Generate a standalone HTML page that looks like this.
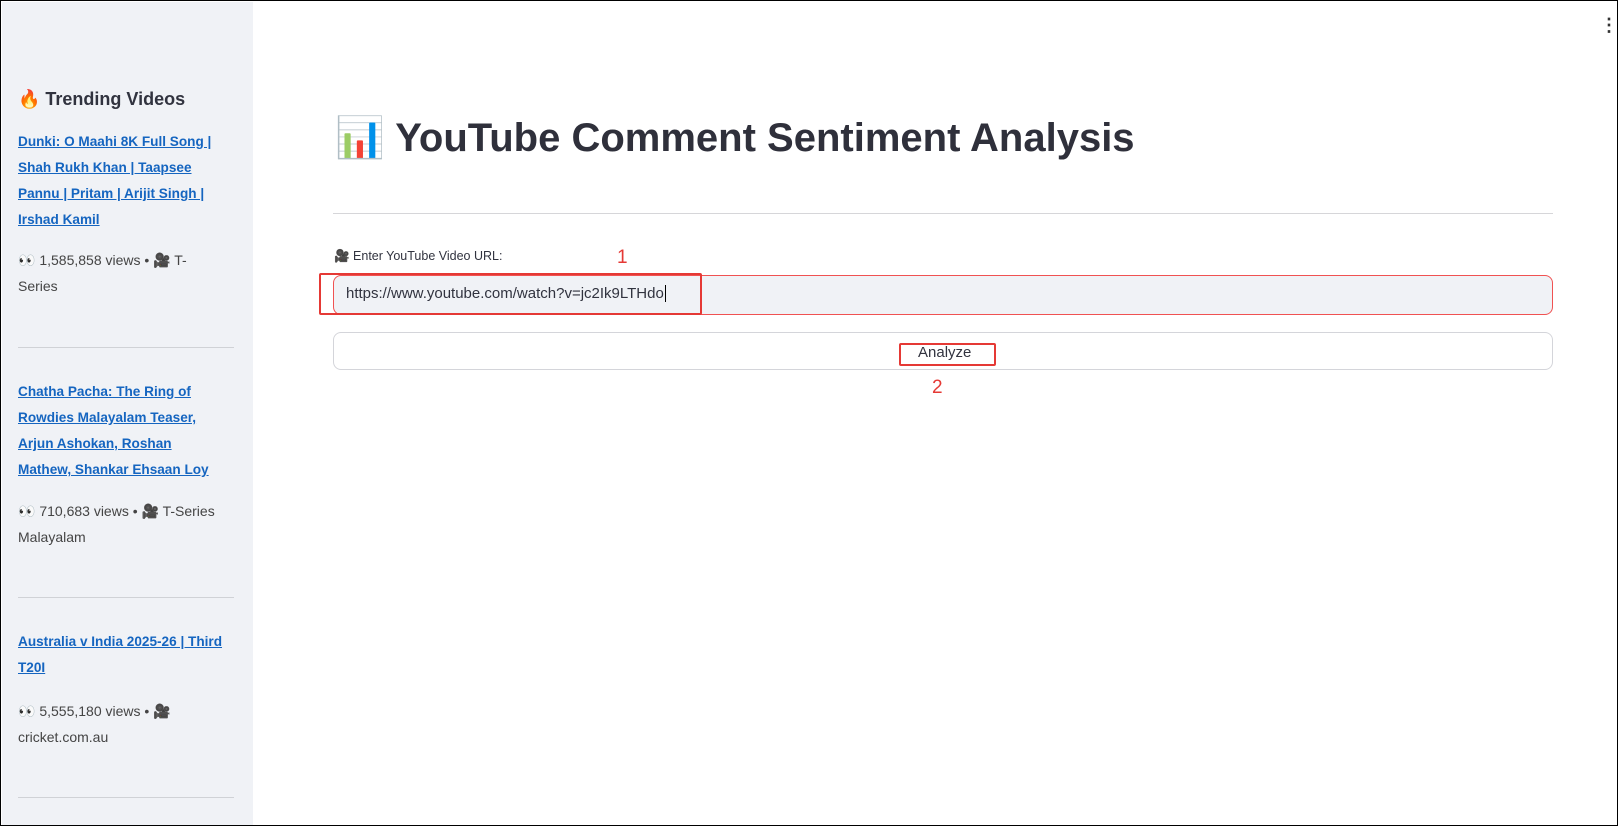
<!DOCTYPE html><html><head><style>
*{box-sizing:border-box;margin:0;padding:0}
body{width:1618px;height:826px;overflow:hidden;font-family:"Liberation Sans",sans-serif;background:#fff;position:relative;border:1px solid #000;color:#31333f}
.sb{position:absolute;left:1px;top:1px;width:251px;height:823px;background:#f0f2f6}
.a{position:absolute;white-space:nowrap}
.sb h3{position:absolute;left:16px;top:87px;font-size:18px;font-weight:bold}
.lk{position:absolute;left:16px;width:230px;font-size:13.6px;line-height:26px;font-weight:bold;color:#1565c0;text-decoration:underline;white-space:nowrap}
.vw{position:absolute;left:16px;width:200px;font-size:14px;line-height:26px;color:#444}
.hr{position:absolute;left:16px;width:216px;height:1px;background:#d0d2d6}
.r{position:absolute;border:2px solid #e53935;border-radius:2px}
</style></head><body>
<div class="sb">
<h3>🔥 Trending Videos</h3>
<div class="lk" style="top:127px">Dunki: O Maahi 8K Full Song |<br>Shah Rukh Khan | Taapsee<br>Pannu | Pritam | Arijit Singh |<br>Irshad Kamil</div>
<div class="vw" style="top:245px">👀 1,585,858 views • 🎥 T-Series</div>
<div class="hr" style="top:345px"></div>
<div class="lk" style="top:377px">Chatha Pacha: The Ring of<br>Rowdies Malayalam Teaser,<br>Arjun Ashokan, Roshan<br>Mathew, Shankar Ehsaan Loy</div>
<div class="vw" style="top:496px">👀 710,683 views • 🎥 T-Series Malayalam</div>
<div class="hr" style="top:595px"></div>
<div class="lk" style="top:627px">Australia v India 2025-26 | Third<br>T20I</div>
<div class="vw" style="top:696px">👀 5,555,180 views • 🎥 cricket.com.au</div>
<div class="hr" style="top:795px"></div>
</div>
<div class="a" style="left:1599px;top:14px;font-size:18px;font-weight:bold;color:#333">⋮</div>
<div class="a" style="left:334px;top:113px;font-size:40px;font-weight:bold;color:#2f303b">📊 YouTube Comment Sentiment Analysis</div>
<div class="a" style="left:332px;top:212px;width:1220px;height:1px;background:#d6d6d9"></div>
<div class="a" style="left:333px;top:248px;font-size:12.5px">🎥 Enter YouTube Video URL:</div>
<div class="a" style="left:332px;top:274px;width:1220px;height:40px;background:#f0f2f6;border:1px solid #f05252;border-radius:8px"></div>
<div class="a" style="left:345px;top:284px;font-size:15px;color:#31333f">https://www.youtube.com/watch?v=jc2Ik9LTHdo<span style="border-left:1px solid #000;margin-left:1px"></span></div>
<div class="r" style="left:318px;top:272px;width:383px;height:42px"></div>
<div class="a" style="left:616px;top:246px;font-size:19px;color:#e53935">1</div>
<div class="a" style="left:332px;top:331px;width:1220px;height:38px;border:1px solid #d4d5da;border-radius:8px;background:#fff"></div>
<div class="a" style="left:917px;top:343px;font-size:15px">Analyze</div>
<div class="r" style="left:898px;top:342px;width:97px;height:23px"></div>
<div class="a" style="left:931px;top:376px;font-size:19px;color:#e53935">2</div>
</body></html>
